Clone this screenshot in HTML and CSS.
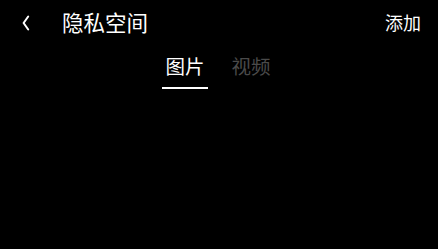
FILE: index.html
```html
<!DOCTYPE html>
<html lang="zh">
<head>
<meta charset="utf-8">
<link rel="stylesheet" href="styles.css">
</head>
<body>
<div class="app">
  <header class="topbar">
    <div class="back">
      <svg width="8" height="16" viewBox="0 0 8 16"><path d="M6.2 1.5 L1.6 8 L6.2 14.5" fill="none" stroke="#fff" stroke-width="2" stroke-linecap="round" stroke-linejoin="round"/></svg>
    </div>
    <h1 class="title">隐私空间</h1>
    <div class="add">添加</div>
  </header>
  <nav class="tabs">
    <div class="tab active">图片<span class="bar"></span></div>
    <div class="tab">视频</div>
  </nav>
</div>
</body>
</html>
```
FILE: styles.css
```css
html, body {
  margin: 0;
  padding: 0;
  background: #000;
}
body {
  width: 438px;
  height: 249px;
  overflow: hidden;
  font-family: "Noto Sans CJK SC", "Noto Sans", sans-serif;
  color: #fff;
}
.topbar {
  display: flex;
  align-items: center;
  height: 44px;
  padding: 0 17px 0 22px;
}
.back {
  width: 40px;
  display: flex;
  align-items: center;
  padding-top: 1px;
}
.title {
  margin: 0;
  font-size: 21.5px;
  font-weight: 400;
  flex: 1;
  margin-top: -1px;
}
.add {
  font-size: 18px;
  font-weight: 400;
}
.tabs {
  display: flex;
  justify-content: center;
  gap: 27px;
  margin-top: 8px;
  padding-right: 2px;
}
.tab {
  position: relative;
  font-size: 19.5px;
  font-weight: 400;
  color: #4a4a4a;
  height: 37px;
  line-height: 27px;
}
.tab.active {
  color: #fff;
}
.bar {
  position: absolute;
  left: -3px;
  right: -3px;
  bottom: 0;
  height: 2px;
  background: #fff;
}
```
